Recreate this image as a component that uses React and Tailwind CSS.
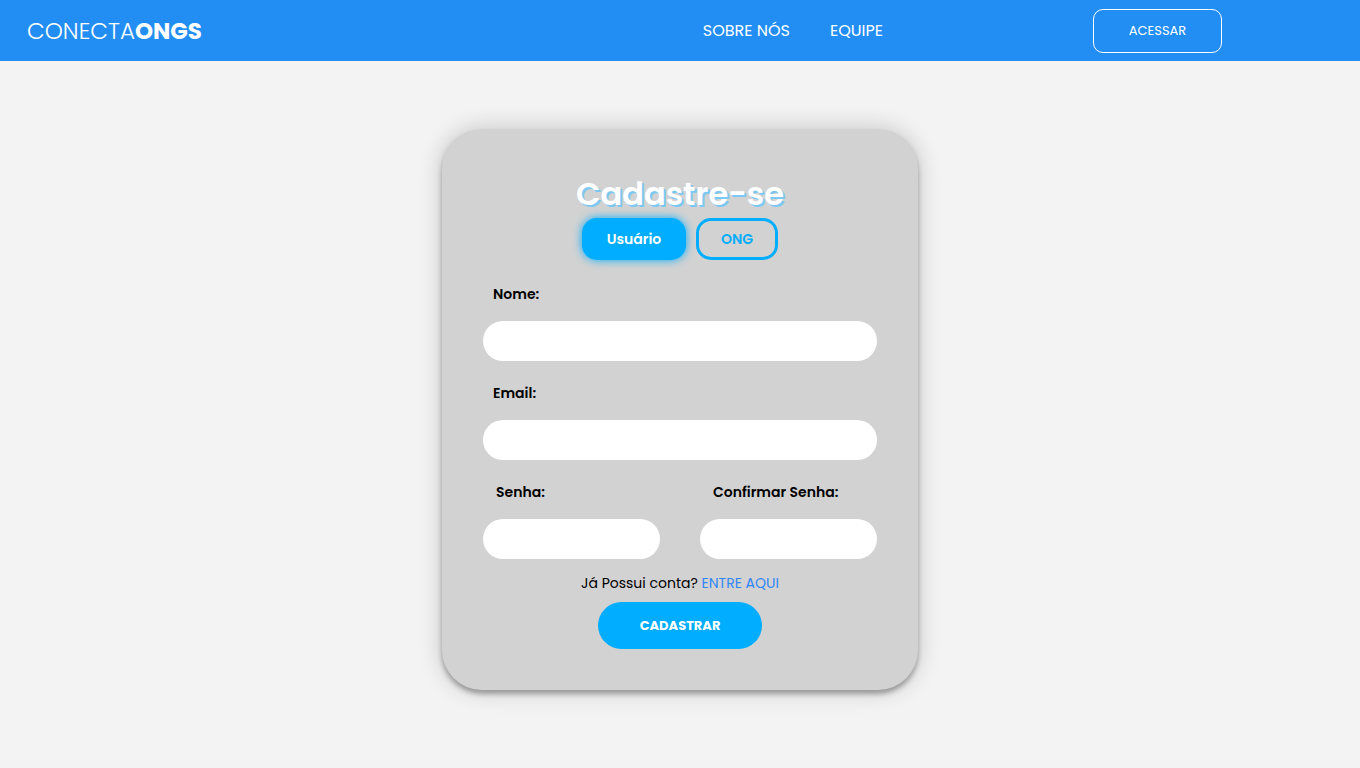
const font = "font-['Poppins','Inter',sans-serif]";

function Field({ id, label, type = "text", inset = "pl-2.5" }) {
  return (
    <div className="flex flex-col gap-4">
      <label htmlFor={id} className={`${inset} text-sm leading-[21px] font-semibold text-black`}>
        {label}
      </label>
      <input
        id={id}
        type={type}
        className="h-10 w-full rounded-[20px] bg-white px-4 text-sm outline-none"
      />
    </div>
  );
}

export default function App() {
  return (
    <div className={`min-h-screen bg-[#f3f3f3] ${font}`}>
      <header className="flex h-[61px] items-center bg-[#228ef3] pr-[138px] pl-[27px] text-white">
        <a href="#inicio" className="mr-auto text-[23px] leading-9 font-light">
          CONECTA<span className="font-bold">ONGS</span>
        </a>
        <nav className="mr-[210px] flex gap-10 text-base">
          <a href="#sobre">SOBRE NÓS</a>
          <a href="#equipe">EQUIPE</a>
        </nav>
        <button type="button" className="h-11 w-[129px] rounded-[10px] border border-white text-[13px]">
          ACESSAR
        </button>
      </header>
      <main className="flex justify-center px-4 pt-[68px] pb-[78px]">
        <form className="flex w-full max-w-[476px] flex-col items-center rounded-[40px] bg-[#d2d2d2] px-[41px] py-[41px] shadow-[0_4px_5px_rgba(0,0,0,0.3),0_0_25px_rgba(0,0,0,0.2)]">
          <h1 className="text-[32px] leading-[48px] font-semibold text-white [text-shadow:2px_2px_0_#7cc8f5]">Cadastre-se</h1>
          <div className="flex gap-2.5">
            <button type="button" className="h-[42px] w-[104px] rounded-[15px] bg-[#00adff] text-sm font-semibold text-white shadow-[0_0_10px_#00adff]">Usuário</button>
            <button type="button" className="h-[42px] w-[82px] rounded-[15px] border-[3px] border-[#00adff] text-sm font-semibold text-[#00adff]">ONG</button>
          </div>
          <div className="mt-6 flex w-full flex-col gap-[22px]">
            <Field id="nome" label="Nome:" />
            <Field id="email" label="Email:" type="email" />
            <div className="grid grid-cols-2 gap-10">
              <Field id="senha" label="Senha:" type="password" inset="pl-[13px]" />
              <Field id="confirmar" label="Confirmar Senha:" type="password" inset="pl-[13px]" />
            </div>
          </div>
          <p className="mt-3.5 text-sm leading-[21px] text-black">
            Já Possui conta? <a href="#entrar" className="text-[#2f86f6]">ENTRE AQUI</a>
          </p>
          <button type="submit" className="mt-2 h-[47px] w-[164px] rounded-full bg-[#00adff] text-[13px] font-bold text-white">CADASTRAR</button>
        </form>
      </main>
    </div>
  );
}
